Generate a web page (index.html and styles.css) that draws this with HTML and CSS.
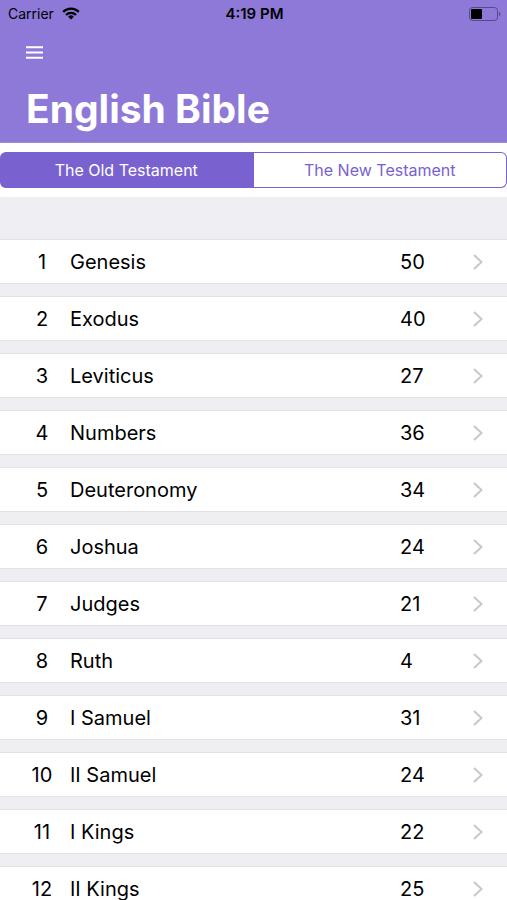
FILE: index.html
```html
<!DOCTYPE html>
<html lang="en">
<head>
  <meta charset="UTF-8">
  <meta name="viewport" content="width=device-width, initial-scale=1.0">
  <title>English Bible</title>
  <link rel="stylesheet" href="styles.css">
</head>
<body>

<header>
  <div class="status-bar">
    <div class="carrier">
      <span>Carrier</span>
      <svg width="18" height="13" viewBox="0 0 18 13" fill="none" stroke="#000" stroke-width="2.3">
        <path d="M1.2 4.9a11 11 0 0 1 15.6 0"/>
        <path d="M4 8a7 7 0 0 1 10 0"/>
        <path d="M9 12.6 6.1 9.7a4.1 4.1 0 0 1 5.8 0z" fill="#000" stroke="none"/>
      </svg>
    </div>
    <span class="time">4:19 PM</span>
    <svg class="battery" width="32" height="14" viewBox="0 0 32 14">
      <rect x="0.5" y="0.5" width="28" height="13" rx="3" fill="none" stroke="#56488a"/>
      <rect x="2" y="2" width="11" height="10" rx="1" fill="#000"/>
      <path d="M30 4.8a2.4 2.4 0 0 1 0 4.4z" fill="#56488a"/>
    </svg>
  </div>
  <button class="menu" aria-label="Menu">
    <svg width="17" height="13" viewBox="0 0 17 13" stroke="#fff" stroke-width="2">
      <path d="M0 1.2h17M0 6.5h17M0 11.8h17"/>
    </svg>
  </button>
  <h1>English Bible</h1>
</header>

<main>
  <div class="tabs">
    <button class="active" aria-pressed="true">The Old Testament</button>
    <button aria-pressed="false">The New Testament</button>
  </div>

  <ul class="books">
    <li><a href="#genesis"><span class="num">1</span><span class="name">Genesis</span><span class="count">50</span><svg class="arrow" viewBox="0 0 10 16"><path d="M1 1l7.5 7L1 15"/></svg></a></li>
    <li><a href="#exodus"><span class="num">2</span><span class="name">Exodus</span><span class="count">40</span><svg class="arrow" viewBox="0 0 10 16"><path d="M1 1l7.5 7L1 15"/></svg></a></li>
    <li><a href="#leviticus"><span class="num">3</span><span class="name">Leviticus</span><span class="count">27</span><svg class="arrow" viewBox="0 0 10 16"><path d="M1 1l7.5 7L1 15"/></svg></a></li>
    <li><a href="#numbers"><span class="num">4</span><span class="name">Numbers</span><span class="count">36</span><svg class="arrow" viewBox="0 0 10 16"><path d="M1 1l7.5 7L1 15"/></svg></a></li>
    <li><a href="#deuteronomy"><span class="num">5</span><span class="name">Deuteronomy</span><span class="count">34</span><svg class="arrow" viewBox="0 0 10 16"><path d="M1 1l7.5 7L1 15"/></svg></a></li>
    <li><a href="#joshua"><span class="num">6</span><span class="name">Joshua</span><span class="count">24</span><svg class="arrow" viewBox="0 0 10 16"><path d="M1 1l7.5 7L1 15"/></svg></a></li>
    <li><a href="#judges"><span class="num">7</span><span class="name">Judges</span><span class="count">21</span><svg class="arrow" viewBox="0 0 10 16"><path d="M1 1l7.5 7L1 15"/></svg></a></li>
    <li><a href="#ruth"><span class="num">8</span><span class="name">Ruth</span><span class="count">4</span><svg class="arrow" viewBox="0 0 10 16"><path d="M1 1l7.5 7L1 15"/></svg></a></li>
    <li><a href="#1-samuel"><span class="num">9</span><span class="name">I Samuel</span><span class="count">31</span><svg class="arrow" viewBox="0 0 10 16"><path d="M1 1l7.5 7L1 15"/></svg></a></li>
    <li><a href="#2-samuel"><span class="num">10</span><span class="name">II Samuel</span><span class="count">24</span><svg class="arrow" viewBox="0 0 10 16"><path d="M1 1l7.5 7L1 15"/></svg></a></li>
    <li><a href="#1-kings"><span class="num">11</span><span class="name">I Kings</span><span class="count">22</span><svg class="arrow" viewBox="0 0 10 16"><path d="M1 1l7.5 7L1 15"/></svg></a></li>
    <li><a href="#2-kings"><span class="num">12</span><span class="name">II Kings</span><span class="count">25</span><svg class="arrow" viewBox="0 0 10 16"><path d="M1 1l7.5 7L1 15"/></svg></a></li>
  </ul>
</main>

</body>
</html>
```

FILE: styles.css
```css
* {
  box-sizing: border-box;
}

body {
  font-family: Inter, "Liberation Sans", sans-serif;
  background: #efeef3;
  color: #000;
  margin: 0;
}

button {
  font-family: inherit;
  cursor: pointer;
}

header {
  background: #8e79d8;
  border-bottom: 1px solid #9d90cc;
}

.status-bar {
  display: grid;
  grid-template-columns: 1fr auto 1fr;
  align-items: center;
  height: 27px;
  padding: 0 6px 0 8px;
  font-size: 14px;
}

.carrier {
  display: flex;
  align-items: center;
  gap: 8px;
}

.time {
  font-size: 15px;
  font-weight: 600;
}

.battery {
  justify-self: end;
}

.menu {
  display: flex;
  align-items: center;
  height: 50px;
  padding: 0 26px;
  border: none;
  background: none;
}

h1 {
  margin: 0;
  padding: 7px 26px 8px;
  font-size: 39px;
  font-weight: bold;
  line-height: 50px;
  color: #fff;
}

.tabs {
  display: flex;
  padding: 9px 0;
  background: #fff;
}

.tabs button {
  flex: 1;
  height: 36px;
  padding: 0;
  border: 1px solid #7962cf;
  border-left: none;
  border-radius: 0 6px 6px 0;
  background: #fff;
  color: #7962cf;
  font-size: 16px;
}

.tabs .active {
  border-radius: 6px 0 0 6px;
  background: #7962cf;
  color: #fff;
}

.books {
  display: flex;
  flex-direction: column;
  gap: 12px;
  margin: 0;
  padding: 42px 0 12px;
  list-style: none;
}

.books a {
  display: flex;
  align-items: center;
  height: 45px;
  padding: 0 24px;
  border: solid #e2e1e6;
  border-width: 1px 0;
  background: #fff;
  color: #000;
  font-size: 20px;
  text-decoration: none;
}

.num {
  width: 36px;
  text-align: center;
}

.name {
  flex: 1;
  margin-left: 10px;
}

.count {
  width: 73px;
}

.arrow {
  width: 10px;
  height: 16px;
  fill: none;
  stroke: #c7c7cc;
  stroke-width: 2;
}
```
